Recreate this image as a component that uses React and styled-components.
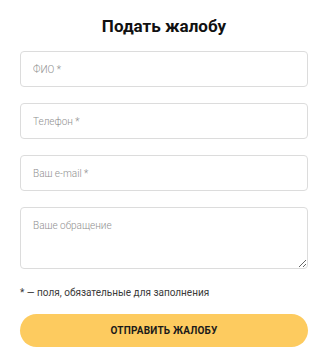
import styled, { createGlobalStyle } from "styled-components"

const Global = createGlobalStyle`
  body {
    margin: 0;
    background: #ffffff;
    font-family: Roboto, "Liberation Sans", sans-serif;
  }
`

export default function App() {
    return (
        <>
            <Global />
            <Form onSubmit={(e) => e.preventDefault()}>
                <Title>Подать жалобу</Title>
                <Fields>
                    <Input placeholder="ФИО *" />
                    <Input placeholder="Телефон *" />
                    <Input placeholder="Ваш e-mail *" />
                    <Textarea placeholder="Ваше обращение" />
                </Fields>
                <Note>* — поля, обязательные для заполнения</Note>
                <Button type="submit">Отправить жалобу</Button>
            </Form>
        </>
    )
}

const Form = styled.form`
  width: 288px;
  padding: 16px 20px 0 20px;
  display: flex;
  flex-direction: column;
`

const Title = styled.h1`
  margin: 0 0 15px 0;
  font-size: 17px;
  line-height: 20px;
  font-weight: 700;
  color: #111;
  text-align: center;
`

const Fields = styled.div`
  display: flex;
  flex-direction: column;
  gap: 16px;
`

const fieldBase = `
  box-sizing: border-box;
  width: 100%;
  border: 1px solid #dcdcdc;
  border-radius: 4px;
  background: #fff;
  font-family: Roboto, "Liberation Sans", sans-serif;
  font-size: 10px;
  font-weight: 300;
  color: #333;
  outline: none;
  &::placeholder {
    color: #8f8f8f;
  }
`

const Input = styled.input`
  ${fieldBase}
  height: 36px;
  padding: 0 12px;
`

const Textarea = styled.textarea`
  ${fieldBase}
  height: 62px;
  padding: 12px 12px;
  resize: vertical;
  display: block;
`

const Note = styled.p`
  margin: 17px 0 0 0;
  font-size: 10px;
  line-height: 13px;
  color: #3a3a3a;
`

const Button = styled.button`
  margin-top: 15px;
  height: 33px;
  width: 100%;
  border: none;
  border-radius: 17px;
  background: #fdcb5f;
  font-family: Roboto, "Liberation Sans", sans-serif;
  font-size: 10px;
  font-weight: 700;
  letter-spacing: 0.2px;
  text-transform: uppercase;
  color: #1a1a1a;
  cursor: pointer;
`
